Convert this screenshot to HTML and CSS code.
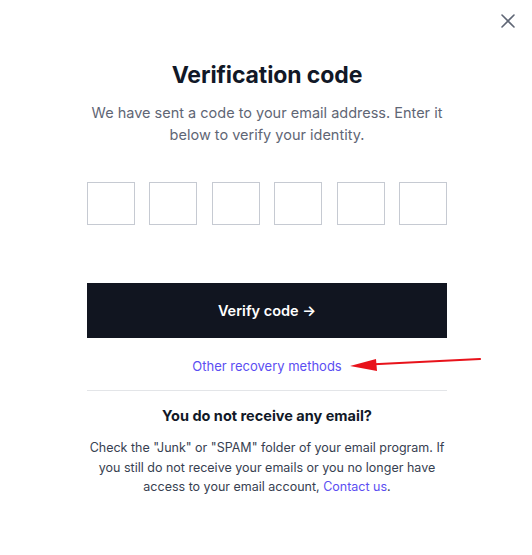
FILE: index.html
```html
<!DOCTYPE html>
<html>
<head>
<meta charset="utf-8">
<link rel="stylesheet" href="styles.css">
</head>
<body>
<div class="modal">
  <button class="close" aria-label="Close">
    <svg width="16" height="16" viewBox="0 0 16 16"><path d="M2 2L14 14M14 2L2 14" stroke="#5f6675" stroke-width="1.6" stroke-linecap="round"/></svg>
  </button>
  <div class="content">
    <h1 class="title">Verification code</h1>
    <p class="subtitle">We have sent a code to your email address. Enter it below to verify your identity.</p>
    <div class="code">
      <span class="box"></span><span class="box"></span><span class="box"></span><span class="box"></span><span class="box"></span><span class="box"></span>
    </div>
    <button class="verify">Verify code →</button>
    <div class="other"><a href="#" class="link">Other recovery methods</a></div>
    <hr class="divider">
    <h2 class="help-title">You do not receive any email?</h2>
    <p class="help">Check the "Junk" or "SPAM" folder of your email program. If you still do not receive your emails or you no longer have access to your email account, <a href="#" class="link">Contact us</a>.</p>
  </div>
  <svg class="arrow" width="140" height="20" viewBox="0 0 140 20">
    <path d="M22 9.5 L133 4" stroke="#e8131b" stroke-width="2.2" stroke-linecap="round" fill="none"/>
    <path d="M3 11 L29 4 L30 16 Z" fill="#e8131b"/>
  </svg>
</div>
</body>
</html>
```
FILE: styles.css
```css
html, body {
  margin: 0;
  padding: 0;
  background: #ffffff;
}
body {
  font-family: Inter, "Noto Sans", sans-serif;
  color: #111827;
}
.modal {
  position: relative;
  width: 532px;
  height: 555px;
}
.close {
  position: absolute;
  top: 13px;
  left: 500px;
  border: 0;
  background: none;
  padding: 0;
  width: 16px;
  height: 16px;
  cursor: pointer;
}
.close svg { display: block; }
.content {
  width: 360px;
  margin: 0 auto;
  padding-top: 60px;
  transform: translateX(1px);
  text-align: center;
}
.title {
  margin: 0;
  font-size: 23px;
  line-height: 30px;
  font-weight: 700;
  color: #111827;
  letter-spacing: -0.1px;
}
.subtitle {
  margin: 12px 0 0;
  font-size: 14.5px;
  line-height: 22px;
  color: #5f6675;
}
.code {
  display: flex;
  justify-content: space-between;
  margin-top: 36px;
}
.box {
  width: 48px;
  height: 43px;
  box-sizing: border-box;
  border: 1px solid #c6cad2;
  background: #fff;
}
.verify {
  display: block;
  width: 360px;
  height: 55px;
  margin-top: 58px;
  border: 0;
  background: #111520;
  color: #ffffff;
  font-family: Inter, "Noto Sans", sans-serif;
  font-size: 14.5px;
  font-weight: 600;
  cursor: pointer;
}
.other {
  margin-top: 18px;
  line-height: 18px;
}
.link {
  color: #5b4ef2;
  text-decoration: none;
  font-size: 13px;
}
.divider {
  border: 0;
  border-top: 1px solid #e3e5e8;
  margin: 15px 0 0;
}
.help-title {
  margin: 15px 0 0;
  font-size: 14.5px;
  line-height: 20px;
  font-weight: 700;
  color: #111827;
}
.help {
  margin: 12px 0 0;
  font-size: 12.5px;
  line-height: 19.5px;
  color: #374151;
}
.help .link { font-size: 12.5px; }
.arrow {
  position: absolute;
  left: 347px;
  top: 355px;
}
```
